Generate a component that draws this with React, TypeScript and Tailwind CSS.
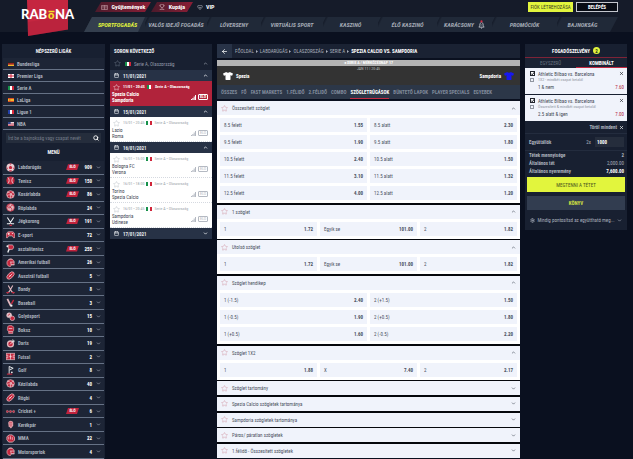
import { useState, type ReactNode } from 'react';
import { ArrowLeft, Calendar, ChevronDown, ChevronUp, Search, Settings, Star, Trophy, X } from 'lucide-react';
import { FaTshirt } from 'react-icons/fa';

type League = { name: string; flag: string };
type Sport = { name: string; icon: string; count: number; live?: boolean };
type Match = { home: string; away: string; time: string; active?: boolean };
type Day = { date: string; matches: Match[] };
type Market = { name: string; options?: [string, string][]; columns?: 2 | 3 };
type Bet = { id: string; event: string; market: string; pick: string; odds: string };

const leagues: League[] = [
  { name: 'Bundesliga', flag: 'de' },
  { name: 'Premier Liga', flag: 'en' },
  { name: 'Serie A', flag: 'it' },
  { name: 'LaLiga', flag: 'es' },
  { name: 'Ligue 1', flag: 'fr' },
  { name: 'NBA', flag: 'us' },
];

const sports: Sport[] = [
  { name: 'Labdarúgás', icon: 'soccer', count: 909, live: true },
  { name: 'Tenisz', icon: 'tennis', count: 150, live: true },
  { name: 'Kosárlabda', icon: 'basket', count: 86, live: true },
  { name: 'Röplabda', icon: 'volley', count: 24 },
  { name: 'Jégkorong', icon: 'hockey', count: 191, live: true },
  { name: 'E-sport', icon: 'gamepad', count: 72 },
  { name: 'asztalitenisz', icon: 'paddle', count: 255, live: true },
  { name: 'Amerikai futball', icon: 'helmet', count: 26 },
  { name: 'Ausztrál futball', icon: 'oval', count: 5 },
  { name: 'Bandy', icon: 'bandy', count: 8 },
  { name: 'Baseball', icon: 'bat', count: 3 },
  { name: 'Golyósport', icon: 'bowls', count: 15 },
  { name: 'Boksz', icon: 'glove', count: 10 },
  { name: 'Darts', icon: 'darts', count: 19 },
  { name: 'Futsal', icon: 'pitch', count: 2 },
  { name: 'Golf', icon: 'golf', count: 8 },
  { name: 'Kézilabda', icon: 'basket', count: 40 },
  { name: 'Rögbi', icon: 'oval', count: 4 },
  { name: 'Cricket +', icon: 'dots', count: 6, live: true },
  { name: 'Kerékpár', icon: 'rider', count: 1 },
  { name: 'MMA', icon: 'fist', count: 22 },
  { name: 'Motorsportok', icon: 'helmet', count: 4 },
];

const days: Day[] = [
  { date: '11/01/2021', matches: [{ home: 'Spezia Calcio', away: 'Sampdoria', time: '11/01 • 20:45', active: true }] },
  { date: '15/01/2021', matches: [{ home: 'Lazio', away: 'Roma', time: '15/01 • 20:45' }] },
  {
    date: '16/01/2021',
    matches: [
      { home: 'Bologna FC', away: 'Verona', time: '16/01 • 15:00' },
      { home: 'Torino', away: 'Spezia Calcio', time: '16/01 • 18:00' },
      { home: 'Sampdoria', away: 'Udinese', time: '16/01 • 20:45' },
    ],
  },
  { date: '17/01/2021', matches: [] },
];

const markets: Market[] = [
  {
    name: 'Összesített szöglet',
    columns: 2,
    options: [
      ['8.5 felett', '1.55'], ['8.5 alatt', '2.30'],
      ['9.5 felett', '1.90'], ['9.5 alatt', '1.80'],
      ['10.5 felett', '2.40'], ['10.5 alatt', '1.50'],
      ['11.5 felett', '3.10'], ['11.5 alatt', '1.32'],
      ['12.5 felett', '4.00'], ['12.5 alatt', '1.20'],
    ],
  },
  { name: '1 szöglet', columns: 3, options: [['1', '1.72'], ['Egyik se', '101.00'], ['2', '1.82']] },
  { name: 'Utolsó szöglet', columns: 3, options: [['1', '1.72'], ['Egyik se', '101.00'], ['2', '1.82']] },
  {
    name: 'Szöglet hendikep',
    columns: 2,
    options: [
      ['1 (-1.5)', '2.40'], ['2 (+1.5)', '1.50'],
      ['1 (-0.5)', '1.90'], ['2 (+0.5)', '1.80'],
      ['1 (+0.5)', '1.60'], ['2 (-0.5)', '2.20'],
    ],
  },
  { name: 'Szöglet 1X2', columns: 3, options: [['1', '1.88'], ['X', '7.40'], ['2', '2.17']] },
  { name: 'Szöglet tartomány' },
  { name: 'Spezia Calcio szögletek tartománya' },
  { name: 'Sampdoria szögletek tartománya' },
  { name: 'Páros/ páratlan szögletek' },
  { name: '1.félidő - Összesített szögletek' },
];

const navItems = [
  'Sportfogadás',
  'Valós idejű fogadás',
  'Lóverseny',
  'Virtuális sport',
  'Kaszinó',
  'Élő kaszinó',
  'Karácsony',
  'Promóciók',
  'Bajnokság',
];

const tabs = [
  'Összes', 'Fő', 'Fast Markets', '1.félidő', '2.félidő', 'Combo', 'Szögletrúgások',
  'Büntető lapok', 'Player Specials', 'Egyebek',
];

const bets: Bet[] = [
  { id: 'bet-1', event: 'Athletic Bilbao vs. Barcelona', market: '1X2 - mindkét csapat betalál', pick: '1 & nem', odds: '7.60' },
  { id: 'bet-2', event: 'Athletic Bilbao vs. Barcelona', market: 'Összesített & mindkét csapat betalál', pick: '2.5 alatt & igen', odds: '7.00' },
];

export default function App() {
  return (
    <div className="flex min-h-screen flex-col bg-[#0a101f] font-['Roboto_Condensed','Liberation_Sans_Narrow',Roboto,sans-serif] text-[5px] leading-[6px] text-[#a9afbb]">
      <Header />
      <main className="grid flex-1 grid-cols-[103px_102px_1fr_102px] gap-[5px] pt-3 pr-[6px] pl-[2px]">
        <Sidebar />
        <Upcoming />
        <EventPanel />
        <BetSlip />
      </main>
    </div>
  );
}

function Header() {
  return (
    <header className="flex h-8 bg-[#151b29]">
      <a href="#" aria-label="Rabona" className="w-[84px] shrink-0">
        <Logo />
      </a>
      <div className="flex flex-1 flex-col pr-[15px]">
        <div className="flex h-[17px] items-start pt-[2px] pl-[11px] text-[6px] font-bold text-white">
          <button className="flex h-[10px] w-[56px] items-center justify-center gap-1 bg-linear-to-r from-[#4c1a2b] to-[#8b1d35] [clip-path:polygon(6px_0,100%_0,50px_100%,0_100%)]">
            <svg viewBox="0 0 16 12" className="h-[5px] w-[7px]" fill="none" stroke="#c9a3ac" strokeWidth="1.5">
              <path d="M1 1h14v10H1zM8 1v10M3 4h3M3 7h3M10 4h3M10 7h3" />
            </svg>
            Gyűjtemények
          </button>
          <button className="flex h-[10px] w-[42px] items-center justify-center gap-1 bg-linear-to-r from-[#4c1a2b] to-[#8b1d35] [clip-path:polygon(6px_0,100%_0,36px_100%,0_100%)]">
            <Trophy className="size-[6px] text-[#c9a3ac]" />
            Kupája
          </button>
          <button className="flex h-[10px] items-center gap-[3px] pl-1">
            <svg viewBox="0 0 16 14" className="h-[5px] w-[6px]" fill="none" stroke="#b5bac4" strokeWidth="1.6">
              <path d="M3 1h10l2 4-7 8-7-8zM5 5l3 4 3-4" />
            </svg>
            VIP
          </button>
          <div className="ml-auto flex gap-[3px]">
            <button className="h-[10px] w-[45px] bg-[#e2f53d] text-[5px] font-normal text-[#38401f]">FIÓK LÉTREHOZÁSA</button>
            <button className="h-[10px] w-[42px] border border-[#c3c6cd] bg-[#080c15] text-[5px]">BELÉPÉS</button>
          </div>
        </div>
        <nav className="grid flex-1 grid-cols-[61fr_62fr_54fr_62fr_55fr_59fr_55fr_65fr_51fr] bg-[#202938] pr-[10px] text-[6px] leading-[8px] font-bold text-[#a3a9b5] uppercase italic [clip-path:polygon(8px_0,100%_0,calc(100%-8px)_100%,0_100%)]">
          {navItems.map((item, i) => (
            <a
              key={item}
              href="#"
              className={
                i === 0
                  ? 'flex items-center justify-center bg-[#343f4e] pl-[6px] whitespace-nowrap text-[#e2f53d] [clip-path:polygon(0_0,100%_0,54px_100%,0_100%)]'
                  : 'flex items-center justify-center gap-1 bg-[linear-gradient(116deg,transparent_2px,#161d2b_3px,transparent_5px)] whitespace-nowrap'
              }
            >
              {item}
              {item === 'Karácsony' && <Bell />}
            </a>
          ))}
        </nav>
      </div>
    </header>
  );
}

function Logo() {
  return (
    <svg viewBox="0 0 84 38" className="relative h-[38px] w-[84px]">
      <path d="M27 0h41v29.500L28 36z" fill="#c52640" />
      <path d="M28 22l40-6v13.500L28 36z" fill="#a91f38" opacity=".35" />
      <g fontFamily="Lato, sans-serif" fontWeight="900" fontSize="13" fill="#fff">
        <text x="21" y="19">RAB</text>
        <text x="48" y="19" fontSize="11" fill="#f3e32c">o</text>
        <text x="55" y="19">NA</text>
      </g>
      <path d="M48.500 11.500h6" stroke="#f3e32c" strokeWidth="1.500" />
    </svg>
  );
}

function Bell() {
  return (
    <svg viewBox="0 0 16 20" className="h-[9px] w-[7px]" fill="none">
      <path d="M8 5c-4 1-4 6-4 8l-2 3h12l-2-3c0-2 0-7-4-8zM7 17l1 2 1-2" stroke="#c5cad2" strokeWidth="1.8" />
      <path d="M6 9l4 4M10 9l-4 4" stroke="#8a92a0" strokeWidth="1.2" />
      <circle cx="8" cy="3" r="2.500" fill="#d32f48" />
    </svg>
  );
}

function Sidebar() {
  return (
    <aside className="flex flex-col bg-[#182031] px-px">
      <h2 className="flex h-[14px] items-center justify-center font-bold text-[#f1f3f6]">NÉPSZERŰ LIGÁK</h2>
      <ul>
        {leagues.map((l) => (
          <li key={l.name} className="h-3 border-b border-[#667286] bg-[#1d2536]">
            <a href="#" className="flex h-full items-center gap-[3px] pl-[5px] font-bold">
              <Flag code={l.flag} />
              {l.name}
            </a>
          </li>
        ))}
      </ul>
      <label className="mx-[3px] mt-[3px] flex h-[10px] items-center bg-[#252d3c] px-[2px]">
        <input
          type="text"
          aria-label="Keresés"
          placeholder="Írd be a bajnokság vagy csapat nevét"
          className="min-w-0 flex-1 bg-transparent outline-none placeholder:text-[#737b89]"
        />
        <Search className="size-[6px] text-white" strokeWidth={3.5} />
      </label>
      <h2 className="flex h-[18px] items-center justify-center font-bold text-[#f1f3f6]">MENÜ</h2>
      <ul className="grid flex-1 auto-rows-fr">
        {sports.map((s) => (
          <li key={s.name} className="border-b border-[#667286] bg-[#1d2536]">
            <a href="#" className="flex h-full items-center pr-[3px] pl-[3px] font-bold">
              <span className="flex w-3 shrink-0 items-center">
                <SportIcon name={s.icon} />
              </span>
              <span className="flex-1 whitespace-nowrap">{s.name}</span>
              {s.live && (
                <span className="h-[6px] w-[13px] bg-[#c0223c] text-center text-[4px] text-white [clip-path:polygon(2px_0,100%_0,11px_100%,0_100%)]">
                  ÉLŐ
                </span>
              )}
              <span className="w-[13px] text-right text-white">{s.count}</span>
              <ChevronDown className="ml-1 size-[5px]" strokeWidth={3} />
            </a>
          </li>
        ))}
      </ul>
    </aside>
  );
}

function Upcoming() {
  return (
    <section className="self-start bg-[#182031]">
      <h2 className="flex h-[13px] items-center pl-1 font-bold text-[#f1f3f6]">SORON KÖVETKEZŐ</h2>
      <button className="flex h-[13px] w-full items-center pr-1 pl-1">
        <Star className="size-[7px] text-[#788293]" strokeWidth={1.5} />
        <span className="mr-[3px] ml-1">
          <Flag code="it" />
        </span>
        <span className="flex-1 text-left text-[#9299a8]">Serie A, Olaszország</span>
        <ChevronUp className="size-[5px]" strokeWidth={3} />
      </button>
      {days.map((d) => (
        <div key={d.date}>
          <button className="flex h-[11px] w-full items-center gap-1 bg-[#273246] px-1 font-bold text-[#e4e7ec]">
            <Calendar className="size-[5px]" strokeWidth={3} />
            <span className="flex-1 text-left">{d.date}</span>
            {d.matches.length ? (
              <ChevronUp className="size-[5px]" strokeWidth={4} />
            ) : (
              <ChevronDown className="size-[5px]" strokeWidth={4} />
            )}
          </button>
          {d.matches.map((m) => (
            <MatchCard key={m.home} match={m} />
          ))}
        </div>
      ))}
    </section>
  );
}

function MatchCard({ match }: { match: Match }) {
  const { home, away, time, active } = match;
  return (
    <a
      href="#"
      className={
        active
          ? 'block h-[25px] bg-[#b1233b] pt-[2px] pr-1 pl-[2px] font-bold text-white'
          : 'block h-[25px] border-b border-dotted border-[#d5d9e0] bg-white pt-[2px] pr-1 pl-[2px] text-[#3f4754]'
      }
    >
      <div className={active ? 'flex h-[8px] items-center text-[4px]' : 'flex h-[8px] items-center text-[4px] text-[#9a9fa9]'}>
        <Star className={active ? 'mr-[3px] ml-px size-[7px]' : 'mr-[3px] ml-px size-[7px] text-[#b4b9c2]'} strokeWidth={1.5} />
        <span className="whitespace-nowrap">{time}</span>
        <span className="mx-[2px]">
          <Flag code="it" />
        </span>
        <span className="whitespace-nowrap">Serie A • Olaszország</span>
      </div>
      <div className="flex items-center">
        <div className="flex-1">
          <p>{home}</p>
          <p>{away}</p>
        </div>
        <svg viewBox="0 0 10 10" className={active ? 'mr-[2px] size-[5px] fill-white' : 'mr-[2px] size-[5px] fill-[#b4b9c2]'}>
          <path d="M0 8h2v2H0zM2.700 6h2v4h-2zM5.400 3h2v7h-2zM8 0h2v10H8z" />
        </svg>
        <span
          className={
            active
              ? 'flex h-[6px] w-[10px] items-center justify-center rounded-[1px] border border-white text-[4px]'
              : 'flex h-[6px] w-[10px] items-center justify-center rounded-[1px] border border-[#b4b9c2] text-[4px] text-[#b4b9c2]'
          }
        >
          ÉLŐ
        </span>
      </div>
    </a>
  );
}

function EventPanel() {
  const crumbs = ['Főoldal', 'Labdarúgás', 'Olaszország', 'Serie A'];
  return (
    <section className="flex min-w-0 flex-col pb-px">
      <div className="mb-[2px] flex h-[14px] items-center bg-[#1a2233] uppercase">
        <button aria-label="Vissza" className="mr-[3px] flex h-full w-[15px] items-center justify-center bg-[#283347] text-white">
          <ArrowLeft className="size-[7px]" strokeWidth={2.5} />
        </button>
        <nav className="flex items-center gap-[2px] whitespace-nowrap">
          {crumbs.map((c) => (
            <span key={c} className="flex items-center gap-[2px]">
              <a href="#">{c}</a>
              <svg viewBox="0 0 4 6" className="h-[3px] w-[2px]" fill="currentColor">
                <path d="M0 0l4 3-4 3z" />
              </svg>
            </span>
          ))}
          <span className="font-bold text-white">Spezia Calcio vs. Sampdoria</span>
        </nav>
      </div>

      <div className="bg-[#333333] text-center text-[4px] text-[#b9b9b9]">
        <p className="h-[6px] bg-[#b4b4b4] font-bold text-white">◂ SERIE A / MÉRKŐZÉSNAP 17</p>
        <p className="h-[5px]">JAN 11 | 20:45</p>
        <div className="flex h-[14px] items-start px-[6px] text-[5px] font-bold text-white">
          <FaTshirt className="mr-[3px] size-[10px]" />
          <span className="pt-[2px]">Spezia</span>
          <span className="ml-auto pt-[2px]">Sampdoria</span>
          <FaTshirt className="ml-[3px] size-[10px] text-[#1717f0]" />
        </div>
      </div>
      <div className="mb-[2px] flex h-[14px] items-stretch gap-1 bg-[#2c3748] px-1 font-bold text-[#808a9b] uppercase">
        {tabs.map((t) => (
          <button
            key={t}
            className={
              t === 'Szögletrúgások'
                ? 'border-b border-[#c22a42] whitespace-nowrap text-white uppercase'
                : 'whitespace-nowrap uppercase'
            }
          >
            {t}
          </button>
        ))}
      </div>

      <div className="flex flex-1 flex-col justify-between bg-[#05070c]">
        {markets.map((m) => (
          <MarketBlock key={m.name} market={m} />
        ))}
      </div>
    </section>
  );
}

function MarketBlock({ market }: { market: Market }) {
  const [open, setOpen] = useState(Boolean(market.options));
  return (
    <div className="bg-white text-[#4a515e]">
      <button onClick={() => setOpen(!open)} className="flex h-[14px] w-full items-center bg-[#f0f3fb] pr-1 pl-1">
        <Star className="mr-1 size-[7px] text-[#cf8f9d]" strokeWidth={1.5} />
        <span className="flex-1 text-left">{market.name}</span>
        {open ? <ChevronUp className="size-[5px]" strokeWidth={3} /> : <ChevronDown className="size-[5px]" strokeWidth={3} />}
      </button>
      {open && market.options ? (
        <div className={market.columns === 2 ? 'grid grid-cols-2 gap-[3px] p-[3px]' : 'grid grid-cols-3 gap-[3px] p-[3px]'}>
          {market.options.map(([label, odds]) => (
            <button key={label} className="flex h-[14px] items-center justify-between bg-[#f0f3fb] pr-1 pl-1">
              <span>{label}</span>
              <span className="font-bold">{odds}</span>
            </button>
          ))}
        </div>
      ) : null}
    </div>
  );
}

function BetSlip() {
  return (
    <aside className="self-start bg-[#182031]">
      <h2 className="flex h-[13px] items-center justify-center gap-[3px] font-bold text-white">
        FOGADÓSZELVÉNY
        <span className="flex size-[7px] items-center justify-center rounded-full bg-[#e2f53d] text-[#30371b]">2</span>
      </h2>
      <div className="grid h-[11px] grid-cols-2 border-t border-[#7e2337] bg-[#1b2334] text-[#67707f]">
        <button>EGYSZERŰ</button>
        <button className="border-b border-[#c22a42] font-bold text-white">KOMBINÁLT</button>
      </div>
      <div className="flex flex-col gap-px">
        {bets.map((b) => (
          <BetRow key={b.id} bet={b} />
        ))}
      </div>
      <div className="flex h-[13px] items-center justify-end border-b border-[#232c3e] pr-[3px]">
        <button className="flex items-center gap-[2px] font-bold">
          Töröl mindent <X className="size-[5px] text-white" strokeWidth={3} />
        </button>
      </div>
      <div className="flex h-[17px] items-center border-b border-[#232c3e] pr-[3px] pl-1">
        <label htmlFor="stake" className="flex-1 font-bold">Együttállók</label>
        <span className="mr-1">2x</span>
        <input
          id="stake"
          type="text"
          defaultValue="1000"
          className="h-[10px] w-[29px] bg-[#252d3c] pl-[2px] font-bold text-white outline-none"
        />
      </div>
      <dl className="grid grid-cols-[1fr_auto] pr-[3px] pb-[2px] pl-1 leading-[8px] font-bold">
        <dt>Tétek mennyisége</dt>
        <dd className="text-right">2</dd>
        <dt>Általános tét</dt>
        <dd className="text-right font-normal">2,000.00</dd>
        <dt>Általános nyeremény</dt>
        <dd className="text-right text-white">7,600.00</dd>
      </dl>
      <div className="flex flex-col gap-1 px-[2px]">
        <button className="h-[15px] bg-[#e2f53d] text-[#48511f]">MEGTENNI A TÉTET</button>
        <button className="h-[14px] bg-[#323d50] font-bold text-[#d4e441]">KÖNYV</button>
      </div>
      <button className="flex h-[20px] w-full items-center justify-center gap-[2px]">
        <Settings className="size-[5px]" strokeWidth={3} />
        Mindig pontosítsd az együttható meg...
        <ChevronDown className="size-[5px]" strokeWidth={3} />
      </button>
    </aside>
  );
}

function BetRow({ bet }: { bet: Bet }) {
  const [picked, setPicked] = useState(true);
  return (
    <div className="flex h-[26px] bg-[#f0f3fb] pt-[3px] pr-[3px] pl-1 text-[#3f4754]">
      <div className="mr-[3px] flex w-[6px] flex-col items-center gap-[2px]">
        <span className="relative flex">
          <input
            type="checkbox"
            id={bet.id}
            checked={picked}
            onChange={() => setPicked(!picked)}
            className="size-[5px] appearance-none border border-[#20242c] bg-white"
          />
          {picked && <Tick />}
        </span>
        <input type="checkbox" aria-label="Fix" className="size-[4px] appearance-none border border-[#9096a1]" />
      </div>
      <div className="min-w-0 flex-1">
        <label htmlFor={bet.id} className="block whitespace-nowrap">{bet.event}</label>
        <p className="h-[6px] text-[4px] whitespace-nowrap text-[#8d939f]">{bet.market}</p>
        <p className="mt-px">{bet.pick}</p>
      </div>
      <div className="flex flex-col items-end justify-between pb-[4px]">
        <button aria-label="Törlés">
          <X className="size-[5px] text-[#20242c]" strokeWidth={3} />
        </button>
        <span className="text-[#b1233b]">{bet.odds}</span>
      </div>
    </div>
  );
}

function Tick() {
  return (
    <svg viewBox="0 0 10 10" className="pointer-events-none absolute inset-0 size-[5px]" fill="none" stroke="#20242c" strokeWidth="2">
      <path d="M2 5l2.500 2.500L9 2" />
    </svg>
  );
}

function Flag({ code }: { code: string }) {
  const art: Record<string, ReactNode> = {
    de: (
      <>
        <path d="M0 0h18v4H0z" fill="#2b2320" />
        <path d="M0 4h18v4H0z" fill="#d8281e" />
        <path d="M0 8h18v4H0z" fill="#f2b632" />
      </>
    ),
    en: (
      <>
        <path d="M0 0h18v12H0z" fill="#fff" />
        <path d="M7.500 0h3v12h-3zM0 4.500h18v3H0z" fill="#d0203a" />
      </>
    ),
    it: (
      <>
        <path d="M0 0h6v12H0z" fill="#17914a" />
        <path d="M6 0h6v12H6z" fill="#fff" />
        <path d="M12 0h6v12h-6z" fill="#d0253a" />
      </>
    ),
    es: (
      <>
        <path d="M0 0h18v12H0z" fill="#d43a25" />
        <path d="M0 2.500h18v7H0z" fill="#f3b92f" />
        <path d="M4 4h3v4H4z" fill="#b5552a" />
      </>
    ),
    fr: (
      <>
        <path d="M0 0h6v12H0z" fill="#2440a8" />
        <path d="M6 0h6v12H6z" fill="#fff" />
        <path d="M12 0h6v12h-6z" fill="#dc2a3c" />
      </>
    ),
    us: (
      <>
        <path d="M0 0h18v12H0z" fill="#e8dfe3" />
        <path d="M0 3h18v1.500H0zM0 6.500h18V8H0zM0 10h18v2H0z" fill="#c44155" />
        <path d="M0 0h8v6H0z" fill="#35478a" />
      </>
    ),
  };
  return (
    <svg viewBox="0 0 18 12" className="h-1 w-[6px]">
      {art[code]}
    </svg>
  );
}

// two-tone pictograms on a 20x20 grid
function SportIcon({ name }: { name: string }) {
  const art: Record<string, ReactNode> = {
    soccer: (
      <>
        <circle cx="10" cy="10" r="9" fill="#e9cdd2" />
        <path d="M10 6l4 3-1.500 4.500h-5L6 9zM7 1h6l-3 3zM1 9l3 2-1 4zM19 9l-3 2 1 4zM7 16h6l-1 3H8z" fill="#c5283f" />
      </>
    ),
    tennis: (
      <>
        <circle cx="10" cy="10" r="9" fill="#c5283f" />
        <path d="M4 3c4 4 4 10 0 14M16 3c-4 4-4 10 0 14" stroke="#f0d5d9" strokeWidth="2" fill="none" />
      </>
    ),
    basket: (
      <>
        <circle cx="10" cy="10" r="8.500" fill="#c5283f" stroke="#e9cdd2" strokeWidth="1.500" />
        <path d="M3 5c6 0 11 5 12 12M17 5C11 5 9 12 10 18M2 12c5-2 10-2 16 1" stroke="#f0d5d9" strokeWidth="1.500" fill="none" />
      </>
    ),
    volley: (
      <>
        <circle cx="10" cy="10" r="8.500" fill="#dfb6bd" stroke="#c5283f" strokeWidth="1.500" />
        <path d="M10 10c0-4 3-6 7-5M10 10c4 2 4 6 1 8M10 10c-4 2-7 0-8-4M7 2c-2 5 0 7 3 8" stroke="#c5283f" strokeWidth="1.800" fill="none" />
      </>
    ),
    hockey: (
      <>
        <path d="M3 1l9 14h6M17 1L8 15H2" stroke="#eceef2" strokeWidth="2.500" fill="none" />
        <path d="M8 17h5v3H8z" fill="#c5283f" />
      </>
    ),
    gamepad: (
      <>
        <path d="M1 17C-1 8 3 4 6 4h8c3 0 7 4 5 13-2 2-4-2-5-4H6c-1 2-3 6-5 4z" fill="#c5283f" stroke="#eac6cc" strokeWidth="1.500" />
        <path d="M6 6v5M3.500 8.500h5M13 8h3" stroke="#fff" strokeWidth="1.800" />
      </>
    ),
    paddle: (
      <>
        <path d="M5 2h9c4 2 4 9-1 10H8L5 9z" fill="#c5283f" stroke="#eac6cc" strokeWidth="1.500" />
        <path d="M7 11l-3 8" stroke="#eceef2" strokeWidth="3" />
        <circle cx="3" cy="5" r="2" fill="#eceef2" />
      </>
    ),
    helmet: (
      <>
        <path d="M2 11C2 0 18-1 18 10v5h-6l-2 4c-5 0-8-3-8-8z" fill="#c5283f" stroke="#dfb6bd" strokeWidth="1.500" />
        <path d="M9 9h10M11 9v6h8M5 5c3-3 7-3 9-1" stroke="#f0d5d9" strokeWidth="1.500" fill="none" />
      </>
    ),
    oval: (
      <>
        <ellipse cx="10" cy="10" rx="10" ry="5.500" transform="rotate(-45 10 10)" fill="#c5283f" stroke="#eac6cc" strokeWidth="1.500" />
        <path d="M6 14l8-8M8 9l3 3" stroke="#fff" strokeWidth="1.500" />
      </>
    ),
    bandy: (
      <>
        <path d="M5 1l8 14 5 3M15 1L7 15l-5 3" stroke="#e3b8bf" strokeWidth="2.500" fill="none" />
        <path d="M1 17h6M13 17h6" stroke="#c5283f" strokeWidth="3" />
      </>
    ),
    bat: (
      <>
        <path d="M3 2l8 16" stroke="#e3b8bf" strokeWidth="4" />
        <path d="M17 4l-5 9" stroke="#c5283f" strokeWidth="3" />
        <circle cx="12" cy="17" r="2.500" fill="#eceef2" />
      </>
    ),
    bowls: (
      <>
        <circle cx="7" cy="7" r="6" fill="#e3c2c8" />
        <circle cx="14" cy="14" r="5" fill="#c5283f" stroke="#eac6cc" strokeWidth="1.500" />
        <path d="M4 8l5-4" stroke="#c5283f" strokeWidth="2" />
      </>
    ),
    glove: (
      <>
        <path d="M4 3c3-3 11-3 13 2v7l-2 3v4H6v-4l-3-4z" fill="#c5283f" stroke="#dfa6af" strokeWidth="1.500" />
        <path d="M6 8h8M6 15h9" stroke="#f0d5d9" strokeWidth="1.800" />
      </>
    ),
    darts: (
      <>
        <circle cx="10" cy="11" r="8" fill="#dfb6bd" />
        <circle cx="10" cy="11" r="5" fill="#c5283f" />
        <path d="M9 12l9-9M15 1l1 4 3 1" stroke="#fff" strokeWidth="1.800" fill="none" />
      </>
    ),
    pitch: (
      <>
        <path d="M0 3h20v14H0z" fill="#c5283f" stroke="#eac6cc" strokeWidth="1.500" />
        <path d="M10 3v14M0 7h4v6H0M20 7h-4v6h4" stroke="#f0d5d9" strokeWidth="1.500" fill="none" />
        <circle cx="10" cy="10" r="2.500" fill="#f0d5d9" />
      </>
    ),
    golf: (
      <>
        <path d="M7 18V1l9 4-8 4" stroke="#eceef2" strokeWidth="2" fill="#3b4252" />
        <path d="M2 18h12" stroke="#c5283f" strokeWidth="2.500" />
        <circle cx="13" cy="14" r="2" fill="#eceef2" />
      </>
    ),
    dots: (
      <>
        <circle cx="3" cy="10" r="2.500" fill="#c5283f" stroke="#dfa6af" />
        <circle cx="10" cy="10" r="2.500" fill="#c5283f" stroke="#dfa6af" />
        <circle cx="17" cy="10" r="2.500" fill="#c5283f" stroke="#dfa6af" />
      </>
    ),
    rider: (
      <>
        <path d="M5 6c1-6 10-6 11 0v7l-5 6-5-5z" fill="#dfa6af" />
        <path d="M7 5h7M7 9h7M8 13h5" stroke="#c5283f" strokeWidth="1.500" />
      </>
    ),
    fist: (
      <>
        <path d="M2 6l5-4h7l5 5v7l-5 4H6l-4-5z" fill="#c5283f" stroke="#e3b8bf" strokeWidth="1.800" />
        <path d="M6 6v6M10 5v7M14 7v6" stroke="#f0d5d9" strokeWidth="1.500" />
      </>
    ),
  };
  return (
    <svg viewBox="0 0 20 20" className="size-[9px]">
      {art[name]}
    </svg>
  );
}
